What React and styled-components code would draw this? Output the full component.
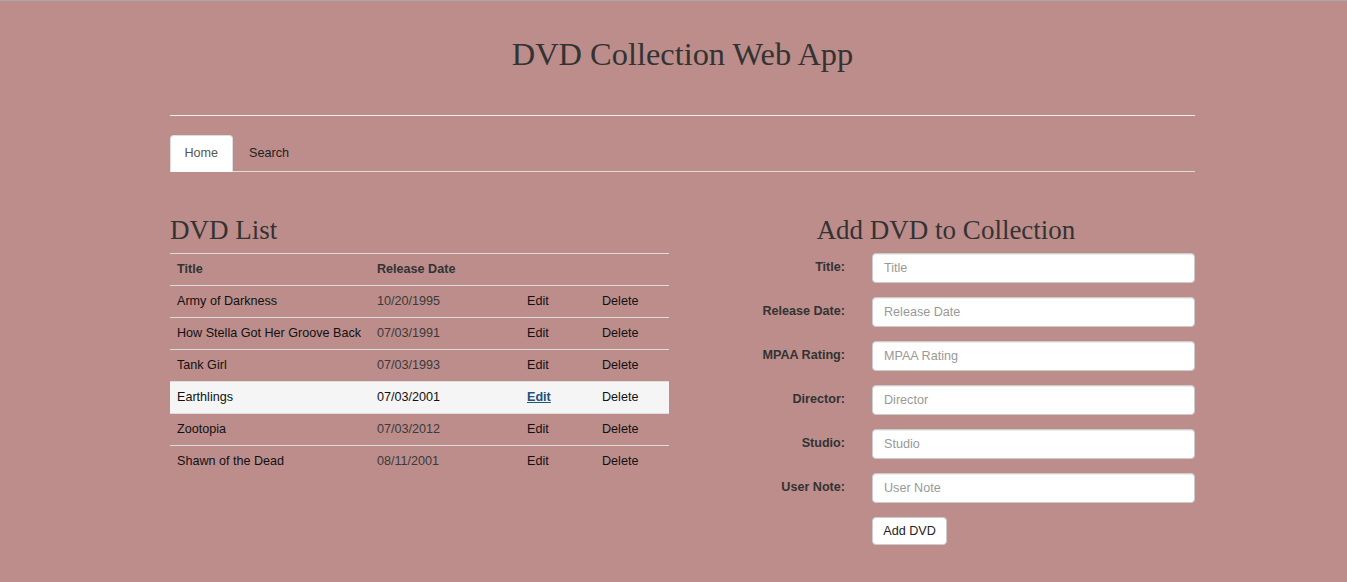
import React from "react";
import styled, { createGlobalStyle } from "styled-components";

const Global = createGlobalStyle`
  html, body { margin: 0; padding: 0; }
  body {
    background: #bc8d8b;
    font-family: "Liberation Sans", Arial, sans-serif;
    font-size: 12.6px;
    line-height: 18px;
    color: #333;
    border-top: 1px solid #a9a9a9;
  }
`;

const Page = styled.div`
  width: 1025px;
  margin-left: 170px;
  padding-bottom: 30px;
`;

const Title = styled.h1`
  margin: 34.6px 0 0;
  font-family: "Liberation Serif", "Times New Roman", serif;
  font-weight: normal;
  font-size: 32.4px;
  line-height: 36px;
  color: #333;
  text-align: center;
`;

const Rule = styled.hr`
  margin: 43px 0 0;
  border: 0;
  border-top: 1px solid #eee;
`;

const Tabs = styled.ul`
  list-style: none;
  margin: 19px 0 0;
  padding: 0;
  display: flex;
  height: 36px;
  border-bottom: 1px solid #ddd;
`;

const Tab = styled.li`
  margin-right: 2px;
  margin-bottom: -1px;
  height: 37px;
  box-sizing: border-box;
  padding: 8px 13.5px 0;
  border: 1px solid ${(p) => (p.$active ? "#ddd" : "transparent")};
  border-bottom-color: ${(p) => (p.$active ? "#fff" : "transparent")};
  border-radius: 4px 4px 0 0;
  background: ${(p) => (p.$active ? "#fff" : "transparent")};
  color: ${(p) => (p.$active ? "#555" : "#222")};
  line-height: 18px;
`;

const Columns = styled.div`
  display: grid;
  grid-template-columns: 499px 498px;
  column-gap: 28px;
  margin-top: 43px;
`;

const Heading = styled.h2`
  margin: 0 0 8px;
  font-family: "Liberation Serif", "Times New Roman", serif;
  font-weight: normal;
  font-size: 27px;
  line-height: 30px;
  color: #333;
  text-align: ${(p) => (p.$center ? "center" : "left")};
`;

const Table = styled.div`
  width: 499px;
`;

const Row = styled.div`
  display: grid;
  grid-template-columns: 200px 150px 75px 1fr;
  height: 32px;
  box-sizing: border-box;
  border-top: 1px solid #ddd;
  align-items: center;
  background: ${(p) => (p.$hover ? "#f5f5f5" : "transparent")};
`;

const Cell = styled.div`
  padding: 0 7px;
  white-space: nowrap;
  font-weight: ${(p) => (p.$head ? "bold" : "normal")};
  color: ${(p) => (p.$head ? "#333" : p.$muted ? "#3a3a3a" : "#111")};
`;

const ActionLink = styled.a`
  color: ${(p) => (p.$hover ? "#23527c" : "#111")};
  text-decoration: ${(p) => (p.$hover ? "underline" : "none")};
  font-weight: ${(p) => (p.$hover ? "bold" : "normal")};
  cursor: pointer;
`;

const Form = styled.form`
  display: flex;
  flex-direction: column;
  gap: 14px;
`;

const FieldRow = styled.div`
  display: grid;
  grid-template-columns: 148px 323px;
  column-gap: 27px;
  align-items: start;
`;

const Label = styled.label`
  text-align: right;
  font-weight: bold;
  color: #333;
  padding-top: 5px;
`;

const Input = styled.input`
  grid-column: 2;
  height: 30px;
  box-sizing: border-box;
  padding: 0 11px;
  border: 1px solid #ccc;
  border-radius: 4px;
  background: #fff;
  box-shadow: inset 0 1px 1px rgba(0, 0, 0, 0.075);
  font-family: "Liberation Sans", Arial, sans-serif;
  font-size: 12.6px;
  color: #555;
  outline: none;
  &::placeholder { color: #999; }
`;

const Button = styled.button`
  grid-column: 2;
  justify-self: start;
  width: 75px;
  height: 28px;
  box-sizing: border-box;
  border: 1px solid #ccc;
  border-radius: 4px;
  background: #fff;
  color: #222;
  font-family: "Liberation Sans", Arial, sans-serif;
  font-size: 12.6px;
  padding: 0;
`;

const dvds = [
  { title: "Army of Darkness", date: "10/20/1995" },
  { title: "How Stella Got Her Groove Back", date: "07/03/1991" },
  { title: "Tank Girl", date: "07/03/1993" },
  { title: "Earthlings", date: "07/03/2001", hover: true },
  { title: "Zootopia", date: "07/03/2012" },
  { title: "Shawn of the Dead", date: "08/11/2001" },
];

const fields = ["Title", "Release Date", "MPAA Rating", "Director", "Studio", "User Note"];

export default function App() {
  return (
    <>
      <Global />
      <Page>
        <Title>DVD Collection Web App</Title>
        <Rule />
        <Tabs>
          <Tab $active>Home</Tab>
          <Tab>Search</Tab>
        </Tabs>
        <Columns>
          <div>
            <Heading>DVD List</Heading>
            <Table>
              <Row>
                <Cell $head>Title</Cell>
                <Cell $head>Release Date</Cell>
                <Cell $head></Cell>
                <Cell $head></Cell>
              </Row>
              {dvds.map((d) => (
                <Row key={d.title} $hover={d.hover}>
                  <Cell>{d.title}</Cell>
                  <Cell $muted={!d.hover}>{d.date}</Cell>
                  <Cell>
                    <ActionLink $hover={d.hover}>Edit</ActionLink>
                  </Cell>
                  <Cell>
                    <ActionLink>Delete</ActionLink>
                  </Cell>
                </Row>
              ))}
            </Table>
          </div>
          <div>
            <Heading $center>Add DVD to Collection</Heading>
            <Form onSubmit={(e) => e.preventDefault()}>
              {fields.map((f) => (
                <FieldRow key={f}>
                  <Label>{f}:</Label>
                  <Input placeholder={f} />
                </FieldRow>
              ))}
              <FieldRow>
                <Button type="submit">Add DVD</Button>
              </FieldRow>
            </Form>
          </div>
        </Columns>
      </Page>
    </>
  );
}
